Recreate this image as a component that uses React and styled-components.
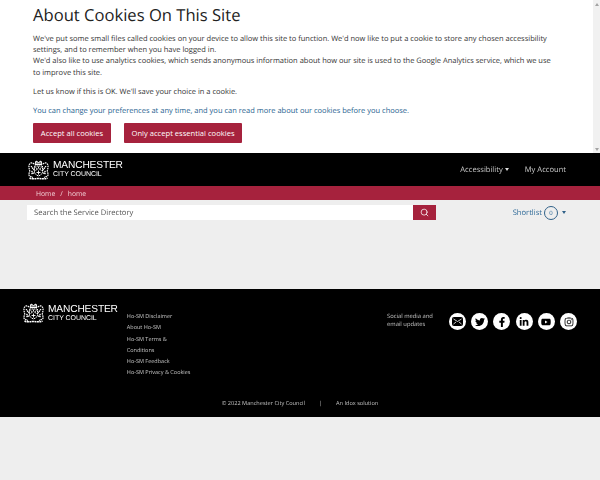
import React from 'react';
import styled, { createGlobalStyle } from 'styled-components';
import { FaTwitter, FaFacebookF, FaLinkedinIn, FaYoutube, FaInstagram } from 'react-icons/fa';
import { FiSearch } from 'react-icons/fi';

const GlobalStyle = createGlobalStyle`
  html, body {
    margin: 0;
    height: 100%;
    background: #eeeeee;
    font-family: "Open Sans", "Noto Sans", sans-serif;
    text-rendering: geometricPrecision;
    overflow: hidden;
  }
  #root { will-change: opacity; }
  * { box-sizing: border-box; }
`;

const Banner = styled.section`
  display: flex;
  height: 153px;
  background: #fff;
`;
const BannerBody = styled.div`
  flex: 1;
  padding: 4px 38px 0 33px;
`;
const Title = styled.h1`
  margin: 0 0 9px;
  font-size: 16.6px;
  line-height: 21px;
  font-weight: 400;
  color: #222;
`;
const Para = styled.p`
  margin: 0 0 ${(p) => (p.$link ? 6 : 8)}px;
  font-size: 7.5px;
  line-height: 11.2px;
  color: ${(p) => (p.$link ? '#1f5f8f' : '#333')};
`;
const ButtonRow = styled.div`
  display: flex;
  gap: 13px;
`;
const RedButton = styled.button`
  width: ${(p) => p.$width}px;
  height: 20px;
  padding: 0;
  border: 0;
  border-radius: 1px;
  background: #a6223d;
  color: #fff;
  font: 400 7.6px "Open Sans", sans-serif;
`;
const Scrollbar = styled.div`
  display: flex;
  flex-direction: column;
  justify-content: space-between;
  align-items: center;
  width: 7px;
  padding: 3px 0 2px;
  background: #f1f1f1;
`;
const Arrow = styled.i`
  width: 0;
  height: 0;
  border-left: 2px solid transparent;
  border-right: 2px solid transparent;
  border-${(p) => (p.$down ? 'top' : 'bottom')}: 3px solid #a3a3a3;
`;

const Header = styled.header`
  display: flex;
  align-items: center;
  justify-content: space-between;
  height: 33px;
  padding: 0 34px 0 28px;
  background: #000;
`;
const Nav = styled.nav`
  display: flex;
  align-items: center;
  gap: 16px;
`;
const NavItem = styled.span`
  display: inline-flex;
  align-items: center;
  gap: 2px;
  font-size: 7.6px;
  color: #c9c9c9;
`;
const Caret = styled.i`
  width: 0;
  height: 0;
  border-left: 2.5px solid transparent;
  border-right: 2.5px solid transparent;
  border-top: 3px solid ${(p) => p.$color || '#ddd'};
`;

const LogoWrap = styled.div`
  display: flex;
  align-self: flex-start;
  align-items: center;
  gap: 4px;
`;
const HeaderLogo = styled(LogoWrap)`
  align-self: center;
`;
const LogoText = styled.div`
  display: flex;
  flex-direction: column;
  color: #fff;
  font-family: "Liberation Sans", sans-serif;
`;
const LogoMain = styled.span`
  font-size: 10.2px;
  line-height: 11px;
  letter-spacing: -0.15px;
`;
const LogoSub = styled.span`
  font-size: 7px;
  line-height: 8px;
  letter-spacing: -0.05px;
`;

const Crest = () => (
  <svg width="21" height="20" viewBox="0 0 42 40" fill="none" stroke="#fff" strokeWidth="2">
    <path d="M14 9l2-7 5 3 5-3 2 7z" fill="#fff" fillOpacity="0.5" />
    <path d="M12 8C7 3 1 7 2 14c0 4 2 6 1 10-1 3-2 6 0 8l7 3" strokeDasharray="3 1.5" strokeWidth="2.5" />
    <path d="M30 8c5-5 11-1 10 6 0 4-2 6-1 10 1 3 2 6 0 8l-7 3" strokeDasharray="3 1.5" strokeWidth="2.5" />
    <path d="M13 12h16v12c0 4-4 6-8 8-4-2-8-4-8-8z" strokeDasharray="3 1" />
    <path d="M15 15l4 3-4 3M27 15l-4 3 4 3M17 25l8 0M21 13v4M21 21v8" strokeWidth="1.8" />
    <path d="M6 12l6 8M36 12l-6 8M7 22l5 6M35 22l-5 6M8 17l3-2M34 17l-3-2M7 28l3-3M35 28l-3-3" strokeWidth="2.5" strokeDasharray="3 1" />
    <path d="M3 36c6 3 12 1 18 1s12 2 18-1" strokeWidth="3" strokeDasharray="4 1" />
  </svg>
);

const LogoInner = () => (
  <>
    <Crest />
    <LogoText>
      <LogoMain>MANCHESTER</LogoMain>
      <LogoSub>CITY COUNCIL</LogoSub>
    </LogoText>
  </>
);

const Breadcrumb = styled.div`
  display: flex;
  align-items: center;
  gap: 5px;
  height: 14px;
  padding-left: 36px;
  background: #a6223d;
  color: #f2cfd6;
  font-size: 6.8px;
`;

const SearchRow = styled.div`
  display: flex;
  align-items: center;
  height: 89px;
  padding: 5px 34px 69px 27px;
`;
const SearchBox = styled.div`
  display: flex;
  width: 409px;
  height: 15px;
`;
const SearchInput = styled.div`
  flex: 1;
  display: flex;
  align-items: center;
  padding-left: 7px;
  background: #fff;
  color: #555;
  font-size: 7.6px;
`;
const SearchButton = styled.div`
  display: flex;
  align-items: center;
  justify-content: center;
  width: 23px;
  background: #a6223d;
  color: #fff;
`;
const Shortlist = styled.div`
  display: flex;
  align-items: center;
  gap: 2px;
  margin-left: auto;
  color: #2f6a98;
  font-size: 7.6px;
`;
const Count = styled.span`
  display: flex;
  align-items: center;
  justify-content: center;
  width: 14px;
  height: 14px;
  margin-right: 2px;
  border: 1px solid #2f6088;
  border-radius: 50%;
  font-size: 6px;
`;

const Footer = styled.footer`
  height: 128px;
  padding: 14px 23px 0;
  background: #000;
  color: #c4c4c4;
`;
const FooterTop = styled.div`
  display: flex;
  height: 96px;
`;
const FooterLinks = styled.ul`
  margin: 8px 0 0 9px;
  padding: 0;
  list-style: none;
  font-size: 5.5px;
  line-height: 11.3px;
  white-space: nowrap;
`;
const SocialLabel = styled.div`
  width: 62px;
  margin: 9px 0 0 auto;
  font-size: 5.8px;
  line-height: 8px;
`;
const SocialIcons = styled.div`
  display: flex;
  gap: 5.2px;
  margin-top: 10px;
`;
const SocialIcon = styled.span`
  display: flex;
  align-items: center;
  justify-content: center;
  width: 17px;
  height: 17px;
  border-radius: 50%;
  background: #fff;
  color: #000;
  font-size: 10px;
`;
const Copyright = styled.div`
  display: flex;
  justify-content: center;
  gap: 14px;
  font-size: 5.6px;
  line-height: 9px;
`;

const MailIcon = () => (
  <svg width="11" height="9" viewBox="0 0 11 9">
    <rect width="11" height="9" rx="2" fill="#000" />
    <path d="M1.5 2l4 2.5 4-2.5M1.5 7l2.5-2M9.5 7L7 5" stroke="#fff" strokeWidth="0.8" fill="none" />
  </svg>
);

const footerLinks = [
  'Ho-SM Disclaimer',
  'About Ho-SM',
  'Ho-SM Terms &',
  'Conditions',
  'Ho-SM Feedback',
  'Ho-SM Privacy & Cookies',
];

export default function App() {
  return (
    <>
      <GlobalStyle />
      <Banner>
        <BannerBody>
          <Title>About Cookies On This Site</Title>
          <Para>
            We've put some small files called cookies on your device to allow this site to function. We'd now like to
            put a cookie to store any chosen accessibility settings, and to remember when you have logged in.
            <br />
            We'd also like to use analytics cookies, which sends anonymous information about how our site is used to
            the Google Analytics service, which we use to improve this site.
          </Para>
          <Para>Let us know if this is OK. We'll save your choice in a cookie.</Para>
          <Para $link>You can change your preferences at any time, and you can read more about our cookies before you choose.</Para>
          <ButtonRow>
            <RedButton $width={78}>Accept all cookies</RedButton>
            <RedButton $width={118}>Only accept essential cookies</RedButton>
          </ButtonRow>
        </BannerBody>
        <Scrollbar>
          <Arrow />
          <Arrow $down />
        </Scrollbar>
      </Banner>
      <Header>
        <HeaderLogo>
          <LogoInner />
        </HeaderLogo>
        <Nav>
          <NavItem>
            Accessibility <Caret />
          </NavItem>
          <NavItem>My Account</NavItem>
        </Nav>
      </Header>
      <Breadcrumb>
        <span>Home</span>
        <span>/</span>
        <span>home</span>
      </Breadcrumb>
      <SearchRow>
        <SearchBox>
          <SearchInput>Search the Service Directory</SearchInput>
          <SearchButton>
            <FiSearch size={9} strokeWidth={2} />
          </SearchButton>
        </SearchBox>
        <Shortlist>
          Shortlist
          <Count>0</Count>
          <Caret $color="#2f6088" />
        </Shortlist>
      </SearchRow>
      <Footer>
        <FooterTop>
          <LogoWrap>
            <LogoInner />
          </LogoWrap>
          <FooterLinks>
            {footerLinks.map((l) => (
              <li key={l}>{l}</li>
            ))}
          </FooterLinks>
          <SocialLabel>
            Social media and
            <br />
            email updates
          </SocialLabel>
          <SocialIcons>
            <SocialIcon><MailIcon /></SocialIcon>
            <SocialIcon><FaTwitter /></SocialIcon>
            <SocialIcon><FaFacebookF /></SocialIcon>
            <SocialIcon><FaLinkedinIn /></SocialIcon>
            <SocialIcon><FaYoutube /></SocialIcon>
            <SocialIcon><FaInstagram /></SocialIcon>
          </SocialIcons>
        </FooterTop>
        <Copyright>
          <span>© 2022 Manchester City Council</span>
          <span>|</span>
          <span>An Idox solution</span>
        </Copyright>
      </Footer>
    </>
  );
}
